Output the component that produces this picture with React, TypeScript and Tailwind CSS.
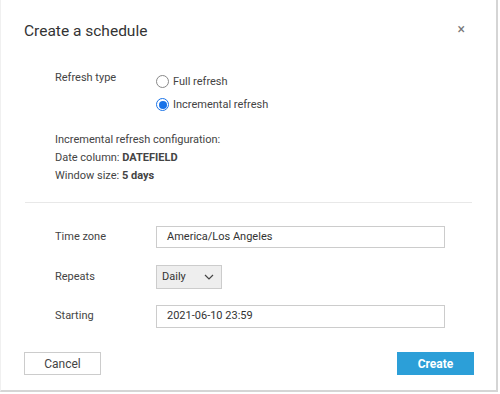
import React from "react";

export default function App() {
  return (
    <div
      className="w-[500px] h-[394px] bg-white relative overflow-hidden text-[#444]"
      style={{ fontFamily: "Roboto, 'Open Sans', sans-serif" }}
    >
      <div className="w-[498px] h-[392px] border-r-2 border-b-2 border-l border-[#d5d5d5] border-l-[#f0f0f0] flex flex-col">
        <div className="flex items-center justify-between pl-[23px] pr-[31px] pt-[20px] h-[44px]">
          <div className="text-[15.5px] text-[#333] leading-none">Create a schedule</div>
          <div className="text-[14px] text-[#777] leading-none mt-[-6px]">×</div>
        </div>

        <div className="pl-[54px] pt-[26px] flex">
          <div className="w-[101px] text-[11px] leading-[14px] pt-[1px]">Refresh type</div>
          <div className="flex flex-col gap-[10px] pt-[5px]">
            <div className="flex items-center gap-[4px]">
              <span className="w-[13px] h-[13px] rounded-full border border-[#888] bg-white"></span>
              <span className="text-[11px] leading-[13px]">Full refresh</span>
            </div>
            <div className="flex items-center gap-[4px]">
              <span className="w-[13px] h-[13px] rounded-full border border-[#1a73e8] bg-white flex items-center justify-center">
                <span className="w-[8px] h-[8px] rounded-full bg-[#1a73e8]"></span>
              </span>
              <span className="text-[11px] leading-[13px]">Incremental refresh</span>
            </div>
          </div>
        </div>

        <div className="pl-[54px] pt-[22px] flex flex-col gap-[4px] text-[11px] leading-[14px]">
          <div>Incremental refresh configuration:</div>
          <div>
            Date column: <span className="font-bold">DATEFIELD</span>
          </div>
          <div>
            Window size: <span className="font-bold">5 days</span>
          </div>
        </div>

        <div className="mx-[24px] mt-[19px] h-px bg-[#e8e8e8]"></div>

        <div className="pl-[54px] pt-[23px] flex flex-col text-[11px]">
          <div className="flex items-center">
            <div className="w-[101px]">Time zone</div>
            <div className="w-[289px] h-[22px] border border-[#ccc] flex items-center pl-[10px] text-[#333]">
              America/Los Angeles
            </div>
          </div>
          <div className="flex items-center mt-[17px]">
            <div className="w-[101px]">Repeats</div>
            <div className="w-[66px] h-[24px] border border-[#ccc] bg-[#eee] flex items-center justify-between pl-[5px] pr-[7px] text-[#333]">
              <span>Daily</span>
              <svg width="10" height="6" viewBox="0 0 10 6" fill="none" stroke="#444" strokeWidth="1.2">
                <path d="M1 1l4 4 4-4" />
              </svg>
            </div>
          </div>
          <div className="flex items-center mt-[16px]">
            <div className="w-[101px]">Starting</div>
            <div className="w-[289px] h-[23px] border border-[#ccc] flex items-center pl-[10px] text-[#333]">
              2021-06-10 23:59
            </div>
          </div>
        </div>

        <div className="flex justify-between pl-[23px] pr-[22px] pt-[24px]">
          <div className="w-[77px] h-[23px] border border-[#ccc] flex items-center justify-center text-[12px] text-[#444]">
            Cancel
          </div>
          <div className="w-[77px] h-[23px] bg-[#2c9fd8] flex items-center justify-center text-[12px] font-bold text-white">
            Create
          </div>
        </div>
      </div>
    </div>
  );
}
